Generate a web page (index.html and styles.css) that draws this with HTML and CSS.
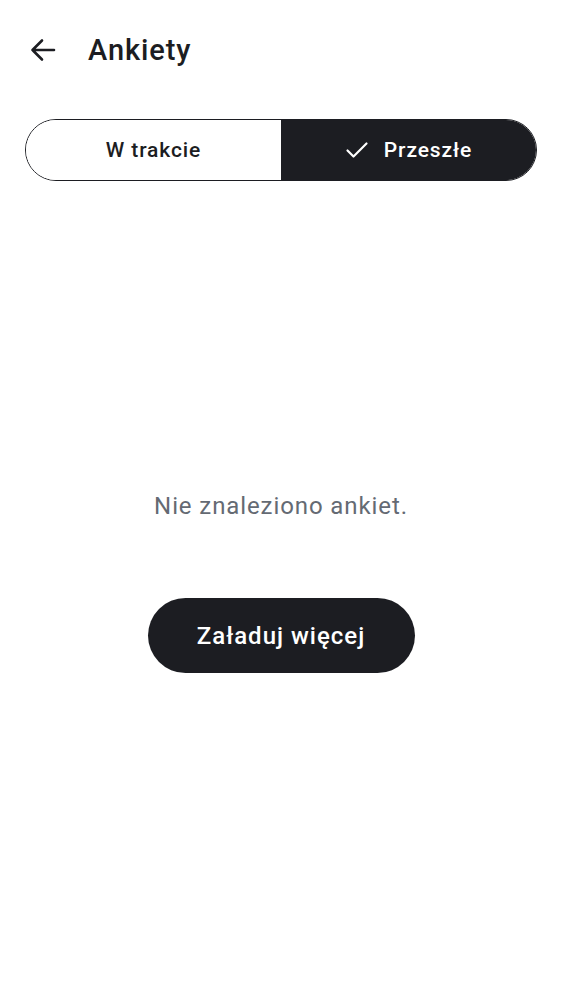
FILE: index.html
```html
<!DOCTYPE html>
<html lang="pl">
<head>
<meta charset="utf-8">
<link rel="stylesheet" href="styles.css">
</head>
<body>
<div class="screen">
  <header class="topbar">
    <button class="back" aria-label="Wstecz">
      <svg width="28" height="28" viewBox="0 0 28 28" fill="none" stroke="#1c1d22" stroke-width="2.6" stroke-linecap="round" stroke-linejoin="round">
        <path d="M25 14H3.5M13 4.5L3.5 14L13 23.5"/>
      </svg>
    </button>
    <h1 class="title">Ankiety</h1>
  </header>

  <div class="segmented">
    <button class="seg">W trakcie</button>
    <button class="seg seg-active">
      <svg class="check" width="24" height="24" viewBox="0 0 24 24" fill="none" stroke="#fff" stroke-width="2.2" stroke-linecap="round" stroke-linejoin="round">
        <path d="M2.5 12.5L8.5 18.5L21.5 5.5"/>
      </svg>
      Przeszłe
    </button>
  </div>

  <p class="empty">Nie znaleziono ankiet.</p>

  <div class="actions">
    <button class="load">Załaduj więcej</button>
  </div>
</div>
</body>
</html>
```

FILE: styles.css
```css
* { box-sizing: border-box; }
html, body { margin: 0; padding: 0; background: #fff; }
body { font-family: Roboto, "Noto Sans", sans-serif; color: #1c1d22; }
button { font-family: inherit; border: none; background: none; padding: 0; margin: 0; cursor: pointer; }

.screen { width: 562px; display: flex; flex-direction: column; }

.topbar { height: 100px; display: flex; align-items: center; padding-left: 29px; }
.back { width: 28px; height: 28px; display: flex; align-items: center; justify-content: center; }
.back svg { display: block; }
.title { margin: 0 0 0 31px; font-size: 29px; font-weight: 500; letter-spacing: 0.9px; line-height: 1; color: #1c1d22; }

.segmented { margin: 19px 25px 0; height: 62px; display: flex; border: 1px solid #1c1d22; border-radius: 31px; overflow: hidden; }
.seg { flex: 1; display: flex; align-items: center; justify-content: center; gap: 15px; font-size: 21px; font-weight: 500; letter-spacing: 0.9px; color: #1c1d22; background: #fff; }
.seg-active { background: #1c1d22; color: #fff; }
.check { display: block; }

.empty { margin: 310px 0 0; text-align: center; font-size: 24px; line-height: 30px; color: #646a73; letter-spacing: 0.9px; }

.actions { display: flex; justify-content: center; margin-top: 77px; }
.load { width: 267px; height: 75px; border-radius: 38px; background: #1c1d22; color: #fff; font-size: 24px; font-weight: 500; letter-spacing: 1px; }
```
